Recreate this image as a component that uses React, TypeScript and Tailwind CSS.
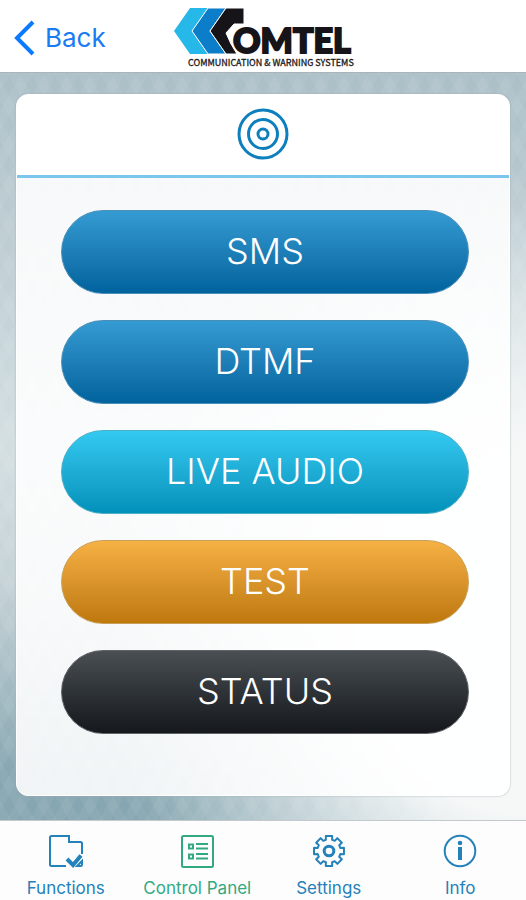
import type { ReactNode } from "react";

const actions = [
  { label: "SMS", tone: "from-[#349bd2] to-[#00639d] border-[#4a8fb8]" },
  { label: "DTMF", tone: "from-[#349bd2] to-[#00639d] border-[#4a8fb8]" },
  { label: "LIVE AUDIO", tone: "from-[#33c9f1] to-[#0091ba] border-[#4aafc8]" },
  { label: "TEST", tone: "from-[#f6b144] to-[#be780b] border-[#c9a05a]" },
  { label: "STATUS", tone: "from-[#4a4f54] to-[#15191d] border-[#5f6367]" },
];

function Logo() {
  return (
    <svg viewBox="0 0 184 64" className="h-16 w-[184px]" role="img" aria-label="Comtel Communication and Warning Systems">
      <path d="M19 2h18L21 25l16 23H19L3 25z" fill="#27b8ea" />
      <path d="M37 2h18L39 25l16 23H37L21 25z" fill="#0b7dc9" stroke="#fff" />
      <path d="M55 2h18v16H63l-8 9 5 11 6 10H55L39 25z" fill="#161418" stroke="#fff" />
      <circle cx="77" cy="35" r="16" fill="#fff" />
      <text x="62" y="47" fill="#161418" stroke="#161418" strokeWidth="2" fontFamily="Lato, sans-serif" fontWeight="900" fontSize="34">
        OMTEL
      </text>
      <text x="17" y="60" fill="#1b181c" stroke="#1b181c" strokeWidth="0.3" fontFamily="'Noto Sans CJK SC', sans-serif" fontWeight="400" fontSize="9">
        COMMUNICATION &amp; WARNING SYSTEMS
      </text>
    </svg>
  );
}

function TargetIcon() {
  return (
    <svg viewBox="0 0 52 52" className="size-[52px]" fill="none" stroke="#0e7fbd" strokeWidth="3" aria-hidden="true">
      <circle cx="26" cy="26" r="24" />
      <circle cx="26" cy="26" r="14.5" />
      <circle cx="26" cy="26" r="5" />
    </svg>
  );
}

function TabIcon({ children }: { children: ReactNode }) {
  return (
    <svg viewBox="0 0 34 34" className="size-[34px]" fill="none" stroke="currentColor" strokeWidth="2" aria-hidden="true">
      {children}
    </svg>
  );
}

const gearPath = (() => {
  const points: string[] = [];
  for (let i = 0; i < 8; i++) {
    const tooth = (i * Math.PI) / 4 - Math.PI / 2;
    for (const [offset, radius] of [[-0.27, 11.7], [-0.21, 15.3], [0.21, 15.3], [0.27, 11.7]]) {
      const a = tooth + offset;
      points.push(`${(17 + radius * Math.cos(a)).toFixed(2)} ${(17 + radius * Math.sin(a)).toFixed(2)}`);
    }
  }
  return `M${points.join("L")}Z`;
})();

const tabs = [
  {
    label: "Functions",
    icon: (
      <>
        <path d="M17 32H2.500Q1 32 1 30.500V3.500Q1 2 2.500 2H20v6h11.500Q33 8 33 9.500V20M28 32h3.500Q33 32 33 30.500V27z" />
        <path d="m18 25 6 6 8-9.500" strokeWidth="4" />
      </>
    ),
  },
  {
    label: "Control Panel",
    icon: (
      <>
        <rect x="2" y="2" width="31" height="31" rx="1.500" />
        <rect x="9" y="10.500" width="4" height="4" />
        <rect x="9" y="20.500" width="4" height="4" />
        <path d="M16 10h12M16 14.500h12M16 20h12M16 24.500h12" />
      </>
    ),
  },
  {
    label: "Settings",
    icon: (
      <>
        <path d={gearPath} strokeLinejoin="round" />
        <circle cx="17" cy="17" r="4.800" strokeWidth="3" />
      </>
    ),
  },
  {
    label: "Info",
    icon: (
      <>
        <circle cx="17" cy="17" r="15.300" />
        <circle cx="17" cy="9" r="2.300" fill="currentColor" stroke="none" />
        <path d="M17 13v13" strokeWidth="4" />
      </>
    ),
  },
];

export default function App() {
  return (
    <div className="flex min-h-screen flex-col bg-white font-['Inter',sans-serif]">
      <header className="grid h-[73px] grid-cols-[1fr_auto_1fr] items-center border-b border-[#a9b5b9] bg-white pt-1">
        <button type="button" className="flex items-center gap-2.5 justify-self-start pl-3.5 text-[26px] leading-8 text-[#1a7bf2]">
          <svg viewBox="0 0 21 36" className="h-9 w-[21px]" fill="none" stroke="#0a7aff" strokeWidth="4" aria-hidden="true">
            <path d="M19 2 3 18l16 16" />
          </svg>
          Back
        </button>
        <Logo />
      </header>

      <main className="flex flex-1 flex-col bg-[repeating-linear-gradient(60deg,#ffffff0d_0_10px,transparent_10px_20px),repeating-linear-gradient(-60deg,#ffffff0d_0_10px,transparent_10px_20px),radial-gradient(ellipse_80%_60%_at_100%_75%,#f6f8f8_40%,#f6f8f800_100%),linear-gradient(180deg,#abbfc7_0%,#d3dee1_50%,#c5d2d6_68%,#86a6b1_94%)] px-4 pt-[21px] pb-6">
        <section className="flex flex-1 flex-col overflow-hidden rounded-xl border border-white bg-white/88 shadow-[0_0_2px_#9dabb0]">
          <div className="flex h-[83px] items-center justify-center border-b-3 border-[#7cc6ed] bg-white pb-0.5">
            <TargetIcon />
          </div>
          <div className="flex flex-col gap-[26px] py-8 pr-10 pl-11">
            {actions.map(({ label, tone }) => (
              <button
                key={label}
                type="button"
                className={`h-[84px] rounded-full border bg-linear-to-b pb-0.5 text-4xl leading-none font-light text-white ${tone}`}
              >
                {label}
              </button>
            ))}
          </div>
        </section>
      </main>

      <nav className="grid h-20 grid-cols-4 border-t border-[#c3c9cc] bg-[#fdfdfe]">
        {tabs.map(({ label, icon }) => (
          <button
            key={label}
            type="button"
            aria-current={label === "Control Panel" ? "page" : undefined}
            className="flex flex-col items-center gap-2 pt-[13px] text-[17px] leading-6 text-[#2581b9] aria-[current=page]:text-[#33a982]"
          >
            <TabIcon>{icon}</TabIcon>
            {label}
          </button>
        ))}
      </nav>
    </div>
  );
}
